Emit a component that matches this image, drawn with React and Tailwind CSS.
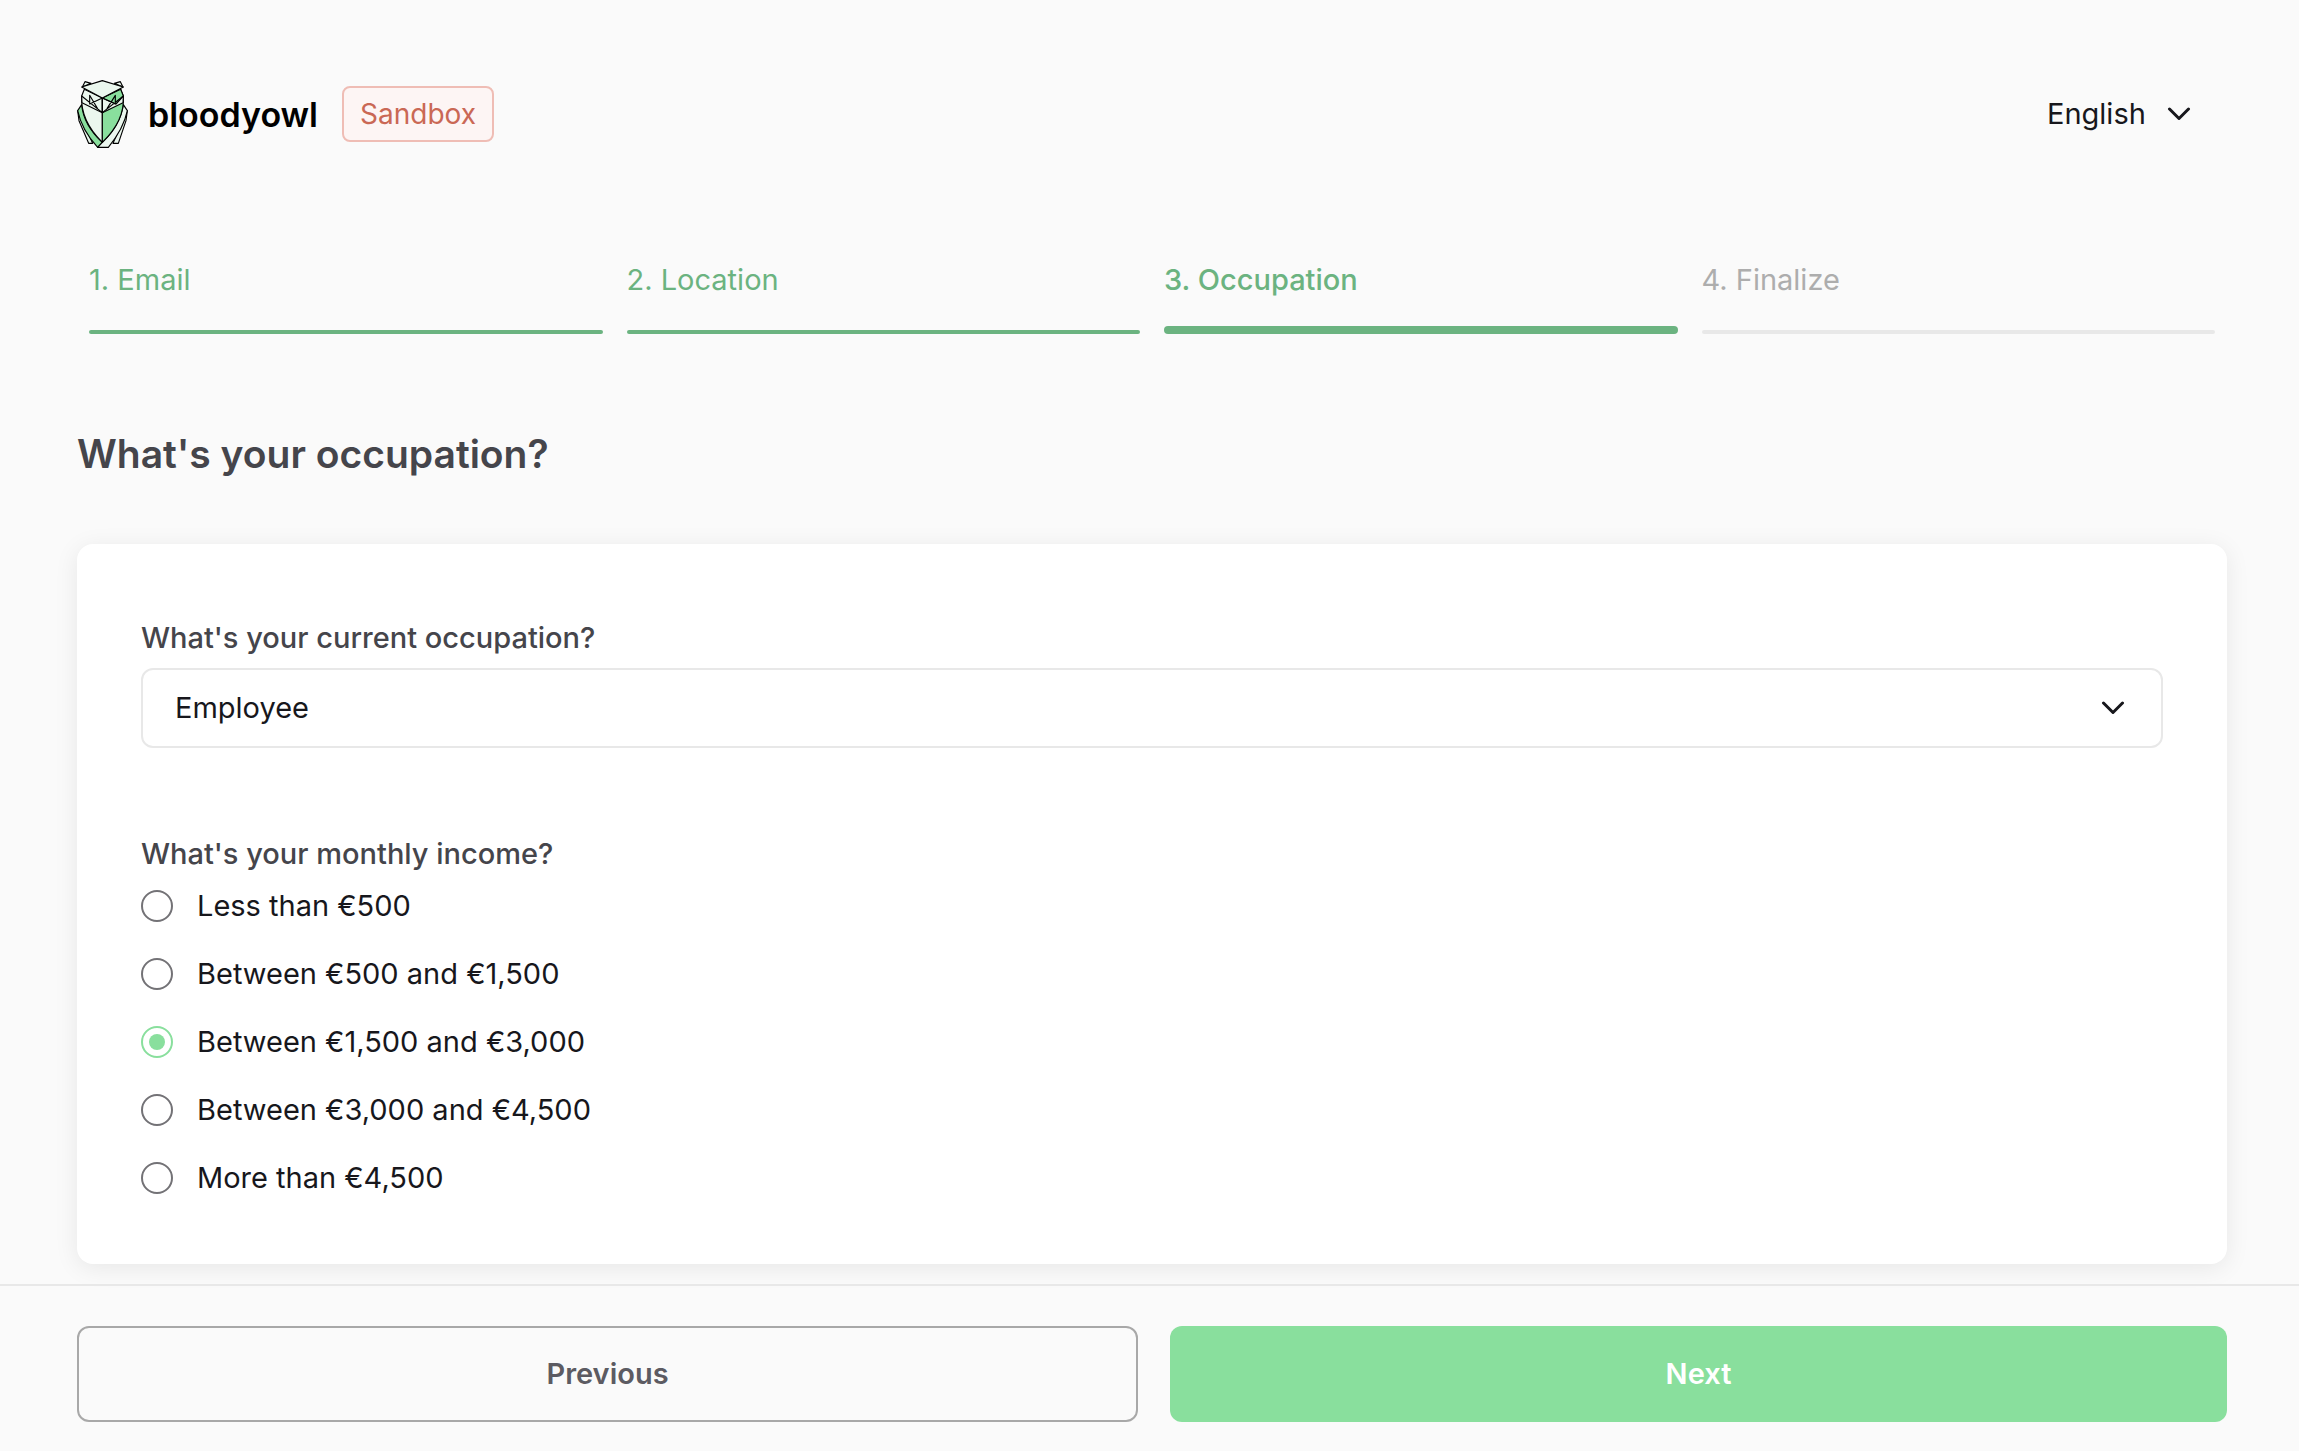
import { useState } from "react";

const steps = [
  { label: "1. Email", state: "done" },
  { label: "2. Location", state: "done" },
  { label: "3. Occupation", state: "active" },
  { label: "4. Finalize", state: "todo" },
];

const stepText = {
  done: "text-[#6bb380]",
  active: "font-medium text-[#6bb380]",
  todo: "text-[#adadad]",
};

const stepBar = {
  done: "h-1 bg-[#6bb380]",
  active: "h-2 bg-[#6bb380]",
  todo: "h-1 bg-[#e8e8e8]",
};

const incomes = [
  "Less than €500",
  "Between €500 and €1,500",
  "Between €1,500 and €3,000",
  "Between €3,000 and €4,500",
  "More than €4,500",
];

function Owl() {
  return (
    <svg viewBox="0 0 153 204" className="h-[68px] w-[51px]" fill="#ebf7ee" stroke="#000" strokeWidth="3.4" strokeLinejoin="round" aria-hidden="true">
      <path d="M2 92 L6 122 L35 190 H47 Z" />
      <path d="M151 92 L147 122 L124 190 H108 Z" />
      <path d="M14 74 L2 92 Q14 150 62 202 L76 187 Q20 136 14 74 Z" fill="#89df9d" />
      <path d="M139 74 L151 92 Q140 146 94 202 H62 L76 187 Q130 136 139 74 Z" />
      <path d="M14 48 Q10 122 76 187 V98 Z" />
      <path d="M139 48 Q144 122 76 187 V98 Z" fill="#89df9d" />
      <path d="M22 28 L14 48 L15 68 L76 98 V54 Z" />
      <path d="M131 28 L139 48 L138 68 L76 98 V54 Z" />
      <path d="M76 54 L131 28 L139 48 L117 72 Z" fill="#89df9d" />
      <path d="M14 48 L76 98 L139 48 M76 54 L38 72 V46 L62 86 M76 54 L115 72 V46 L90 86 M76 54 V98" fill="none" />
      <path d="M16 21 L24 5 L42 10 Z M138 21 L130 5 L112 10 Z" />
      <path d="M14 21 L76 2 L139 21 L76 54 Z" />
    </svg>
  );
}

function Chevron({ className }) {
  return (
    <svg viewBox="0 0 24 14" className={"pointer-events-none absolute h-3.5 w-6 " + className} fill="none" stroke="#17171c" strokeWidth="3" strokeLinecap="round" strokeLinejoin="round" aria-hidden="true">
      <path d="M2.5 2 L12 11.5 L21.5 2" />
    </svg>
  );
}

export default function App() {
  const [income, setIncome] = useState(incomes[2]);

  return (
    <div className="flex min-h-screen flex-col bg-[#fafafa] font-['Inter',sans-serif] text-[29px]/9 text-[#17171c]">
      <header className="flex items-center pt-20 pr-[72px] pl-[77px]">
        <Owl />
        <span className="ml-5 pt-0.5 text-[34px]/10 font-semibold text-black">bloodyowl</span>
        <span className="ml-6 flex h-14 items-center rounded-lg border-2 border-[#efbdb5] bg-[#fdf5f4] px-4 text-[28px] text-[#ca6855]">
          Sandbox
        </span>
        <div className="relative ml-auto flex items-center">
          <select aria-label="Language" className="h-14 w-[180px] appearance-none bg-transparent">
            <option>English</option>
          </select>
          <Chevron className="right-9" />
        </div>
      </header>

      <main className="flex-1 pt-[114px] pr-[72px] pb-5 pl-[77px]">
        <ol className="flex">
          {steps.map((s) => (
            <li key={s.label} className="flex h-[72px] flex-1 flex-col justify-between px-3" aria-current={s.state === "active" ? "step" : undefined}>
              <span className={stepText[s.state]}>{s.label}</span>
              <span className={"rounded " + stepBar[s.state]} />
            </li>
          ))}
        </ol>

        <h1 className="mt-24 text-[39px]/12 font-semibold text-[#45454b]">What's your occupation?</h1>

        <form className="mt-[66px] flex flex-col rounded-2xl bg-white px-16 pt-[76px] pb-[68px] shadow-[0_4px_24px_rgba(0,0,0,0.08)]">
          <label htmlFor="occupation" className="font-medium text-[#45454b]">What's your current occupation?</label>
          <div className="relative mt-3 flex items-center">
            <select id="occupation" className="h-20 w-full appearance-none rounded-xl border-2 border-[#e8e8e8] bg-white px-8">
              <option>Employee</option>
            </select>
            <Chevron className="right-[38px]" />
          </div>

          <fieldset className="mt-22">
            <legend className="font-medium text-[#45454b]">What's your monthly income?</legend>
            <div className="mt-4 flex flex-col gap-8">
              {incomes.map((text) => (
                <label key={text} className="flex items-center gap-6">
                  <input
                    type="radio"
                    name="income"
                    checked={income === text}
                    onChange={() => setIncome(text)}
                    className="grid size-8 shrink-0 appearance-none place-items-center rounded-full border-2 border-[#737276] bg-white checked:border-[#89df9d] checked:before:size-4 checked:before:rounded-full checked:before:bg-[#89df9d]"
                  />
                  {text}
                </label>
              ))}
            </div>
          </fieldset>
        </form>
      </main>

      <footer className="flex gap-8 border-t-2 border-[#e8e8e8] pt-10 pr-[72px] pb-[29px] pl-[77px] font-semibold">
        <button type="button" className="h-24 flex-1 rounded-xl border-2 border-[#a8a8a8] text-[#5c5b62]">Previous</button>
        <button type="button" className="h-24 flex-1 rounded-xl bg-[#89df9d] text-white">Next</button>
      </footer>
    </div>
  );
}
